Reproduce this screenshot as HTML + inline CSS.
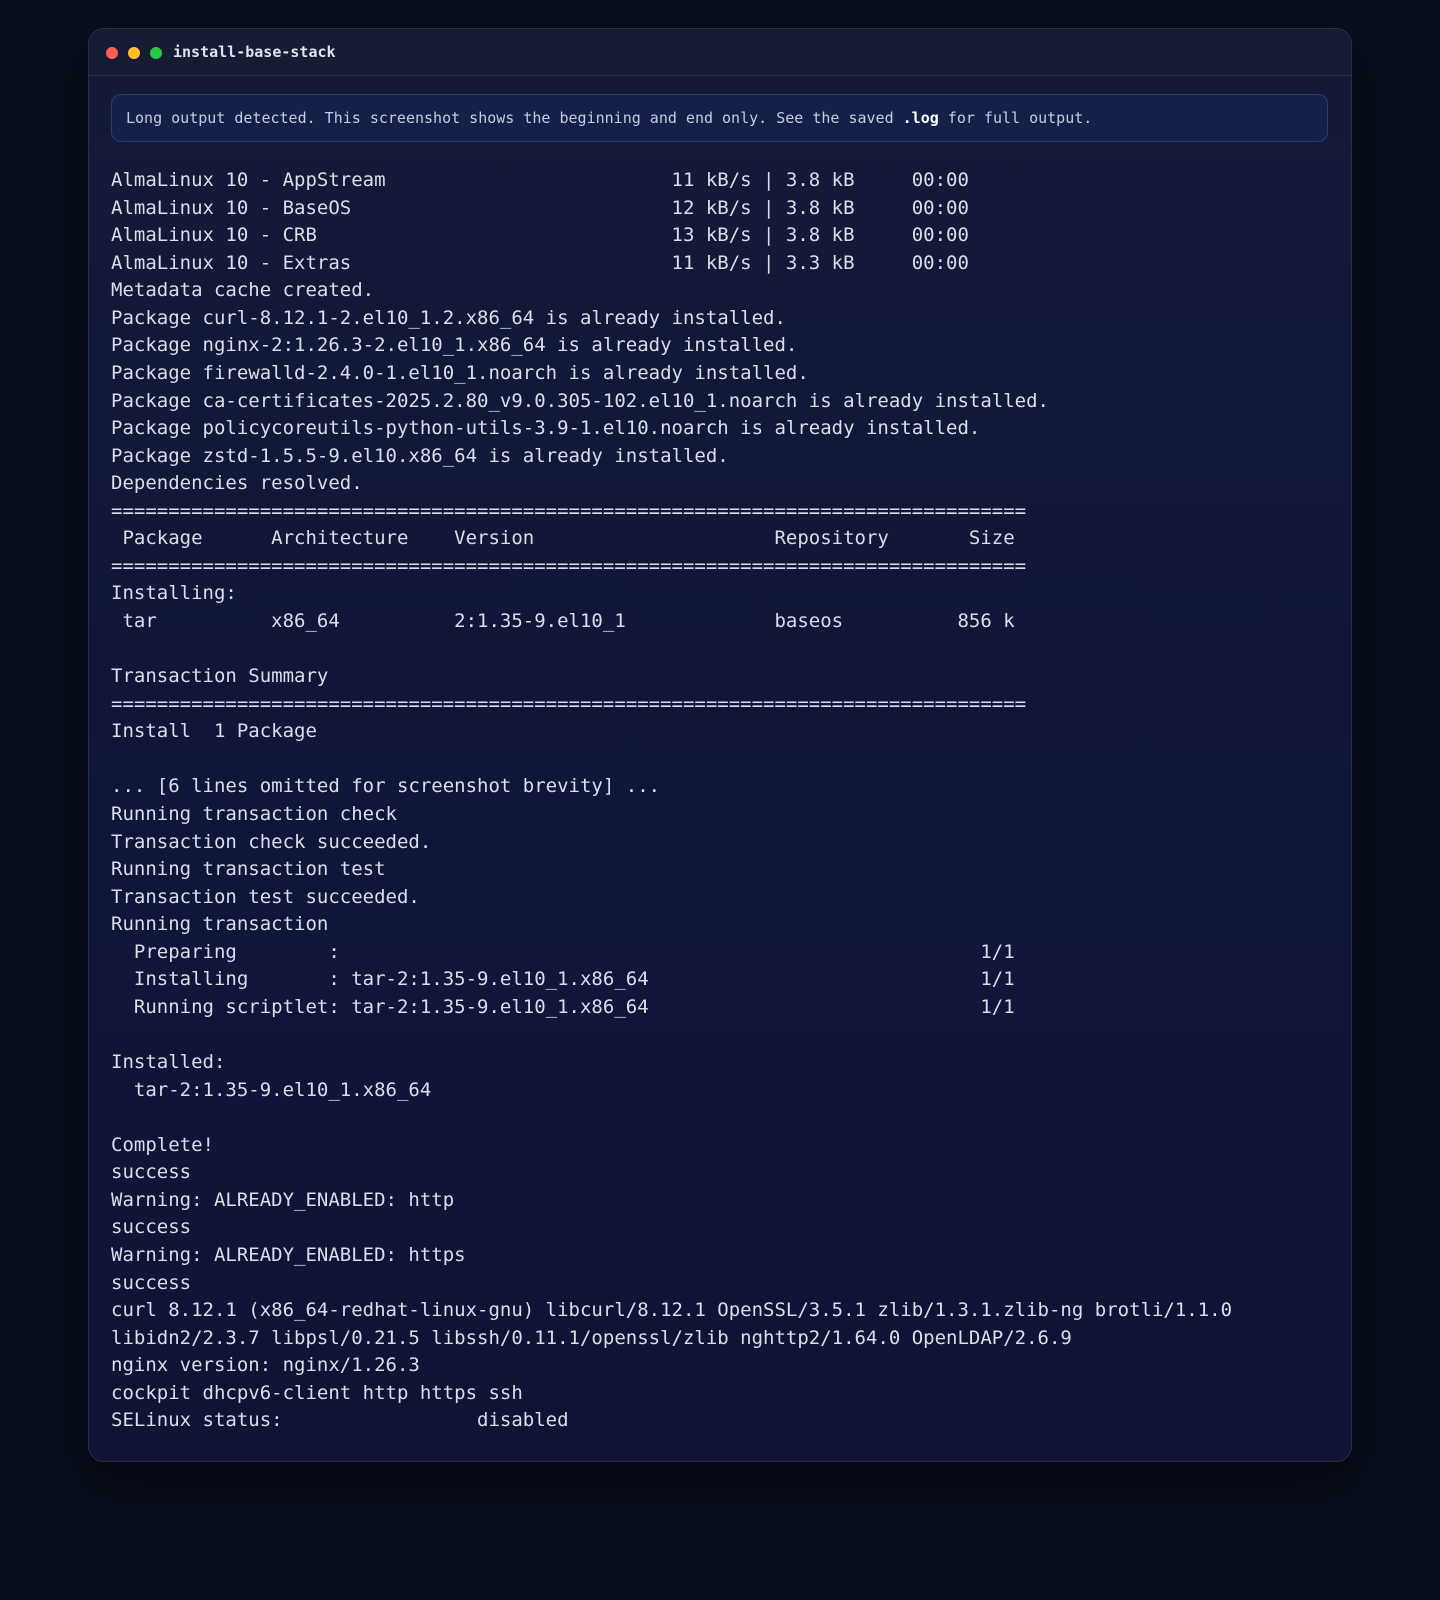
<!DOCTYPE html>
<html><head><meta charset="utf-8"><style>
html,body{margin:0;padding:0;}
body{width:1440px;height:1600px;background:#0a0f1e;position:relative;overflow:hidden;font-family:"DejaVu Sans Mono","Liberation Mono",monospace;}
.win{position:absolute;left:88px;top:28px;width:1262px;height:1432px;border:1px solid #262e4c;border-radius:16px;background:linear-gradient(#141a36,#10153a 60%,#0f1434);overflow:hidden;box-shadow:0 20px 50px rgba(0,0,0,.5);}
.bar{height:46px;background:#151b33;border-bottom:1px solid #27304e;position:relative;}
.dot{position:absolute;top:18px;width:12px;height:12px;border-radius:50%;}
.title{position:absolute;left:84px;top:13px;color:#dfe4f0;font-weight:bold;font-size:15px;line-height:20px;}
.banner{position:absolute;left:22px;top:65px;width:1217px;height:48px;box-sizing:border-box;background:#142049;border:1px solid #2c3b6c;border-radius:10px;color:#c6cde2;font-size:15px;line-height:46px;padding-left:14px;white-space:pre;}
.banner b{color:#fff;}
pre{position:absolute;left:22px;top:138px;margin:0;font-family:"DejaVu Sans Mono",monospace;font-size:19px;line-height:27.56px;color:#dadfeb;}
</style></head><body>
<div class="win">
<div class="bar">
<div class="dot" style="left:17px;background:#ff5f57"></div>
<div class="dot" style="left:39px;background:#febc2e"></div>
<div class="dot" style="left:61px;background:#28c840"></div>
<div class="title">install-base-stack</div>
</div>
<div class="banner">Long output detected. This screenshot shows the beginning and end only. See the saved <b>.log</b> for full output.</div>
<pre>AlmaLinux 10 - AppStream                         11 kB/s | 3.8 kB     00:00
AlmaLinux 10 - BaseOS                            12 kB/s | 3.8 kB     00:00
AlmaLinux 10 - CRB                               13 kB/s | 3.8 kB     00:00
AlmaLinux 10 - Extras                            11 kB/s | 3.3 kB     00:00
Metadata cache created.
Package curl-8.12.1-2.el10_1.2.x86_64 is already installed.
Package nginx-2:1.26.3-2.el10_1.x86_64 is already installed.
Package firewalld-2.4.0-1.el10_1.noarch is already installed.
Package ca-certificates-2025.2.80_v9.0.305-102.el10_1.noarch is already installed.
Package policycoreutils-python-utils-3.9-1.el10.noarch is already installed.
Package zstd-1.5.5-9.el10.x86_64 is already installed.
Dependencies resolved.
================================================================================
 Package      Architecture    Version                     Repository       Size
================================================================================
Installing:
 tar          x86_64          2:1.35-9.el10_1             baseos          856 k

Transaction Summary
================================================================================
Install  1 Package

... [6 lines omitted for screenshot brevity] ...
Running transaction check
Transaction check succeeded.
Running transaction test
Transaction test succeeded.
Running transaction
  Preparing        :                                                        1/1
  Installing       : tar-2:1.35-9.el10_1.x86_64                             1/1
  Running scriptlet: tar-2:1.35-9.el10_1.x86_64                             1/1

Installed:
  tar-2:1.35-9.el10_1.x86_64

Complete!
success
Warning: ALREADY_ENABLED: http
success
Warning: ALREADY_ENABLED: https
success
curl 8.12.1 (x86_64-redhat-linux-gnu) libcurl/8.12.1 OpenSSL/3.5.1 zlib/1.3.1.zlib-ng brotli/1.1.0
libidn2/2.3.7 libpsl/0.21.5 libssh/0.11.1/openssl/zlib nghttp2/1.64.0 OpenLDAP/2.6.9
nginx version: nginx/1.26.3
cockpit dhcpv6-client http https ssh
SELinux status:                 disabled</pre>
</div>
</body></html>
